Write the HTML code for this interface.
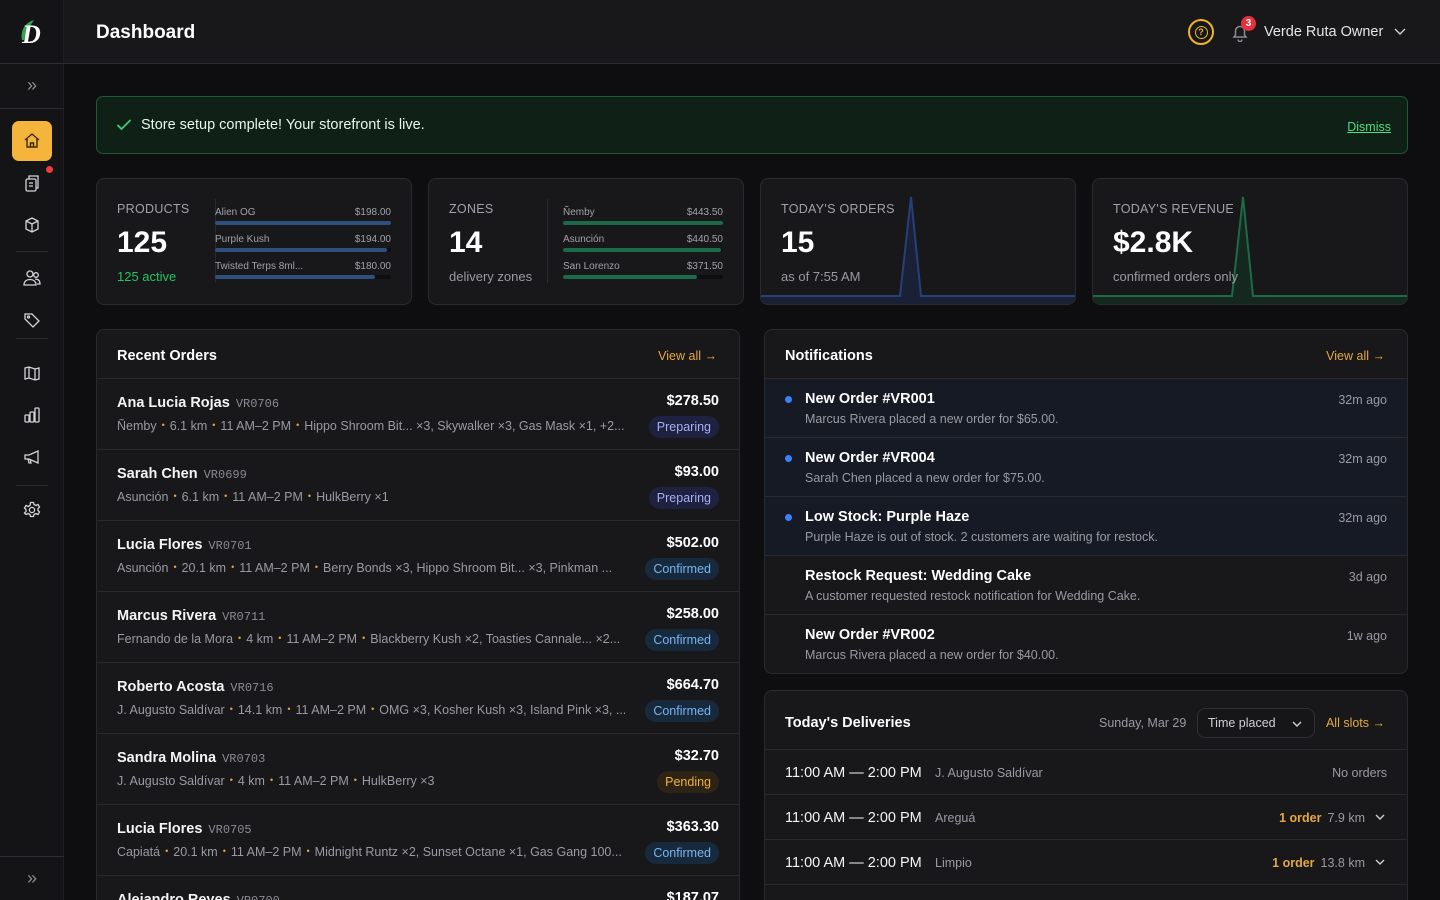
<!DOCTYPE html>
<html style="width:1440px;height:900px;overflow:hidden"><head><meta charset="utf-8"><style>
*{box-sizing:border-box;margin:0;padding:0}
body{width:1440px;height:900px;overflow:hidden;background:#0e0e10;font-family:"Liberation Sans",sans-serif;color:#e5e5e5;position:relative}
.side{position:absolute;left:0;top:0;width:64px;height:900px;background:#141416;border-right:1px solid #1f1f23}
.hdr{position:absolute;left:64px;top:0;right:0;height:64px;background:#18181b;border-bottom:1px solid #2a2d33}
.ico{position:absolute;left:22px;width:20px;height:20px}
svg{display:block}
.card{position:absolute;top:178px;width:316px;height:127px;background:#18181b;border:1px solid #2a2a2e;border-radius:8px;overflow:hidden}
.lbl{position:absolute;left:20px;top:23px;font-size:12.5px;color:#a1a1aa;letter-spacing:.3px}
.big{position:absolute;left:20px;top:47px;font-size:30px;font-weight:bold;color:#fff}
.sub{position:absolute;left:20px;top:90px;font-size:13px;color:#9a9aa2}
.bars{position:absolute;left:118px;top:20px;width:176px;border-left:1px solid #2a2a2e;padding-left:0}
.br{position:absolute;left:0;width:176px;font-size:10px;color:#a1a1aa}
.br span{position:absolute;right:0}
.br i{position:absolute;left:0;top:14px;height:4px;width:176px;background:#0e0e10;border-radius:2px}
.br b{position:absolute;left:0;top:14px;height:4px;border-radius:2px}
.panel{position:absolute;background:#18181b;border:1px solid #2a2a2e;border-radius:8px;overflow:hidden}
.ph{height:49px;border-bottom:1px solid #2a2a2e;position:relative}
.ph h3{position:absolute;left:20px;top:18px;font-size:14.5px;color:#fff}
.va{position:absolute;right:22px;top:19px;font-size:12.5px;color:#e5a83b}
.row{position:relative;height:71px;border-bottom:1px solid #2a2a2e}
.row .n{position:absolute;left:20px;top:16px;font-size:14.5px;font-weight:bold;color:#f4f4f5}
.row .n em{font-style:normal;font-weight:normal;font-family:"Liberation Mono",monospace;font-size:12px;color:#8a8a92;margin-left:6px}
.row .d{position:absolute;left:20px;top:40px;font-size:12.5px;color:#9a9aa2;white-space:nowrap;width:510px;overflow:hidden}
.dot{color:#e5a83b;margin:0 5px;font-size:9px;position:relative;top:-2px}
.row .p{position:absolute;right:20px;top:14px;font-size:14.5px;font-weight:bold;color:#fff}
.st{position:absolute;right:20px;top:37px;height:22px;line-height:22px;padding:0 8px;border-radius:11px;font-size:12.5px}
.prep{background:#1e2140;color:#a5b0f5}
.conf{background:#172a3d;color:#79b4ef}
.pend{background:#2e2416;color:#f0b23d}
.nr{position:relative;height:59px;border-bottom:1px solid #2a2a2e}
.nr.u{background:#161a24}
.nr .t{position:absolute;left:40px;top:12px;font-size:14.5px;font-weight:bold;color:#fff}
.nr .m{position:absolute;left:40px;top:33px;font-size:12.5px;color:#9a9aa2}
.nr .a{position:absolute;right:20px;top:14px;font-size:12.5px;color:#9a9aa2}
.nr .bd{position:absolute;left:20px;top:17px;width:7px;height:7px;border-radius:50%;background:#3b82f6}
.dr{position:relative;height:45px;border-bottom:1px solid #2a2a2e}
.dr .tm{position:absolute;left:20px;top:15px;font-size:14.5px;color:#f4f4f5}
.dr .lc{position:absolute;left:170px;top:16px;font-size:12.5px;color:#9a9aa2}
.dr .r{position:absolute;right:42px;top:16px;font-size:12.5px;color:#9a9aa2}
.dr .r b{color:#e5a83b;margin-right:6px}
.dr svg{position:absolute;right:22px;top:19px}
</style></head><body>
<div class="side">
 <div style="position:absolute;left:0;top:0;width:64px;height:64px;border-bottom:1px solid #2a2d33">
  <svg width="64" height="64" viewBox="0 0 64 64"><path d="M22 40 C20 30 26 22 34 20 C30 26 26 32 24 40Z" fill="#2fa84f"/><text x="22" y="43" font-family="Liberation Serif" font-style="italic" font-weight="bold" font-size="26" fill="#fff">D</text></svg>
 </div>
 <div style="position:absolute;left:0;top:64px;width:64px;height:45px;border-bottom:1px solid #2a2d33;color:#8a8a92;font-size:18px;text-align:center;line-height:42px">»</div>
 <div style="position:absolute;left:12px;top:121px;width:40px;height:40px;background:#f5b53d;border-radius:7px"></div>
 <svg class="ico" style="top:131px" viewBox="0 0 20 20" fill="none" stroke="#3a2a08" stroke-width="1.4"><path d="M3 9 L10 3 L17 9 M5 8 V16 H15 V8 M8.5 16 V12 H11.5 V16"/></svg>
 <div style="position:absolute;left:46px;top:166px;width:7px;height:7px;border-radius:50%;background:#ef3b3b"></div>
 <svg class="ico" style="top:173px" viewBox="0 0 20 20" fill="none" stroke="#d4d4d8" stroke-width="1.3"><rect x="4" y="6" width="10" height="12" rx="1.5"/><path d="M7 6V3h9v12h-2M7 10h4M7 13h4"/></svg>
 <svg class="ico" style="top:215px" viewBox="0 0 20 20" fill="none" stroke="#d4d4d8" stroke-width="1.3"><path d="M10 3l6 3v8l-6 3-6-3V6z M4 6l6 3 6-3 M10 9v8"/></svg>
 <div style="position:absolute;left:16px;top:251px;width:32px;height:1px;background:#2a2a2e"></div>
 <svg class="ico" style="top:268px" viewBox="0 0 20 20" fill="none" stroke="#d4d4d8" stroke-width="1.3"><circle cx="8" cy="6" r="3"/><circle cx="14" cy="7" r="2.3"/><path d="M2 17c0-4 3-5.5 6-5.5s6 1.5 6 5.5z M13 11c3 0 5 1.5 5 5h-3"/></svg>
 <svg class="ico" style="top:310px" viewBox="0 0 20 20" fill="none" stroke="#d4d4d8" stroke-width="1.3"><path d="M3 4h7l7 7-6 6-8-8z"/><circle cx="6.5" cy="7" r="1"/></svg>
 <div style="position:absolute;left:16px;top:338px;width:32px;height:1px;background:#2a2a2e"></div>
 <svg class="ico" style="top:363px" viewBox="0 0 20 20" fill="none" stroke="#d4d4d8" stroke-width="1.3"><path d="M3 5l4-1 6 2 4-1v11l-4 1-6-2-4 1z M7 4v11 M13 6v11"/></svg>
 <svg class="ico" style="top:405px" viewBox="0 0 20 20" fill="none" stroke="#d4d4d8" stroke-width="1.3"><rect x="3" y="10" width="4" height="7" rx="1"/><rect x="8" y="7" width="4" height="10" rx="1"/><rect x="13" y="3" width="4" height="14" rx="1"/></svg>
 <svg class="ico" style="top:447px" viewBox="0 0 20 20" fill="none" stroke="#d4d4d8" stroke-width="1.3"><path d="M3 8h4l9-4v12l-9-4H3z M6 12l1 4h2l-1-4"/></svg>
 <div style="position:absolute;left:16px;top:485px;width:32px;height:1px;background:#2a2a2e"></div>
 <svg class="ico" style="top:500px" viewBox="0 0 20 20" fill="none" stroke="#d4d4d8" stroke-width="1.3"><circle cx="10" cy="10" r="2.6"/><path d="M8.5 2.5h3l.5 2 2 1 2-1 1.5 2.5-1.5 1.5v2l1.5 1.5-1.5 2.5-2-1-2 1-.5 2h-3l-.5-2-2-1-2 1L2.5 13 4 11.5v-2L2.5 8 4 5.5l2 1 2-1z"/></svg>
 <div style="position:absolute;left:0;top:856px;width:64px;height:44px;border-top:1px solid #2a2d33;color:#8a8a92;font-size:18px;text-align:center;line-height:42px">»</div>
</div>
<div class="hdr">
 <div style="position:absolute;left:32px;top:22px;font-size:19px;font-weight:bold;color:#fff">Dashboard</div>
 <div style="position:absolute;left:1124px;top:19px;width:26px;height:26px;border:2px solid #f0b323;border-radius:50%;color:#f0b323;font-size:12px;text-align:center;line-height:22px"><span style="display:inline-block;width:13px;height:13px;border:1.5px solid #f0b323;border-radius:50%;line-height:10px;font-size:9px;font-weight:bold;vertical-align:middle">?</span></div>
 <svg style="position:absolute;left:1166px;top:22px" width="20" height="20" viewBox="0 0 20 20" fill="none" stroke="#8a8a92" stroke-width="1.5"><path d="M4 15h12l-1.5-2V9a4.5 4.5 0 0 0-9 0v4z M8 17.5a2 2 0 0 0 4 0"/></svg>
 <div style="position:absolute;left:1177px;top:16px;width:15px;height:15px;border-radius:50%;background:#e5313b;color:#fff;font-size:10px;font-weight:bold;text-align:center;line-height:15px">3</div>
 <div style="position:absolute;left:1200px;top:24px;font-size:14.5px;color:#e5e5e5">Verde Ruta Owner</div>
 <svg style="position:absolute;left:1330px;top:27px" width="12" height="10" viewBox="0 0 12 10" fill="none" stroke="#cfcfd4" stroke-width="1.4"><path d="M1 2l5 5 5-5"/></svg>
</div>

<div style="position:absolute;left:96px;top:96px;width:1312px;height:58px;background:#0f2117;border:1px solid #1f5a33;border-radius:7px">
 <svg style="position:absolute;left:19px;top:21px" width="16" height="14" viewBox="0 0 16 14" fill="none" stroke="#3fcf6f" stroke-width="1.8"><path d="M1.5 7l4 4 9-9"/></svg>
 <div style="position:absolute;left:44px;top:20px;font-size:14.5px;color:#e8f5ec">Store setup complete! Your storefront is live.</div>
 <div style="position:absolute;right:16px;top:23px;font-size:12.5px;color:#4ade80;text-decoration:underline">Dismiss</div>
</div>

<div class="card" style="left:96px"><div class="lbl">PRODUCTS</div><div class="big">125</div><div class="sub" style="color:#22c55e">125 active</div>
 <div class="bars" style="height:84px;top:20px"></div>
 <div style="position:absolute;left:118px;top:28px">
  <div class="br" style="top:0">Alien OG<span>$198.00</span><i></i><b style="width:176px;background:#2f4f7d"></b></div>
  <div class="br" style="top:27px">Purple Kush<span>$194.00</span><i></i><b style="width:172px;background:#2f4f7d"></b></div>
  <div class="br" style="top:54px">Twisted Terps 8ml...<span>$180.00</span><i></i><b style="width:160px;background:#2f4f7d"></b></div>
 </div></div>
<div class="card" style="left:428px"><div class="lbl">ZONES</div><div class="big">14</div><div class="sub">delivery zones</div>
 <div class="bars" style="height:84px;top:20px"></div>
 <div style="position:absolute;left:134px;top:28px">
  <div class="br" style="top:0;width:160px">Ñemby<span>$443.50</span><i style="width:160px"></i><b style="width:160px;background:#1b6a4a"></b></div>
  <div class="br" style="top:27px;width:160px">Asunción<span>$440.50</span><i style="width:160px"></i><b style="width:158px;background:#1b6a4a"></b></div>
  <div class="br" style="top:54px;width:160px">San Lorenzo<span>$371.50</span><i style="width:160px"></i><b style="width:134px;background:#1b6a4a"></b></div>
 </div></div>
<div class="card" style="left:760px"><svg style="position:absolute;left:0;top:0" width="316" height="127"><path d="M0 117 L139 117 L150 18 L160 117 L316 117 L316 127 L0 127Z" fill="#1a2035"/><path d="M0 117 L139 117 L150 18 L160 117 L316 117" fill="none" stroke="#26407a" stroke-width="2"/></svg><div class="lbl">TODAY'S ORDERS</div><div class="big">15</div><div class="sub">as of 7:55 AM</div></div>
<div class="card" style="left:1092px"><svg style="position:absolute;left:0;top:0" width="316" height="127"><path d="M0 117 L139 117 L150 18 L160 117 L316 117 L316 127 L0 127Z" fill="#142820"/><path d="M0 117 L139 117 L150 18 L160 117 L316 117" fill="none" stroke="#1d6a48" stroke-width="2"/></svg><div class="lbl">TODAY'S REVENUE</div><div class="big">$2.8K</div><div class="sub">confirmed orders only</div></div>

<div class="panel" style="left:96px;top:329px;width:644px;height:571px;border-bottom:0;border-radius:8px 8px 0 0">
 <div class="ph"><h3>Recent Orders</h3><div class="va">View all →</div></div>
 <div class="row"><div class="n">Ana Lucia Rojas<em>VR0706</em></div><div class="d">Ñemby<span class="dot">•</span>6.1 km<span class="dot">•</span>11 AM–2 PM<span class="dot">•</span>Hippo Shroom Bit... ×3, Skywalker ×3, Gas Mask ×1, +2...</div><div class="p">$278.50</div><div class="st prep">Preparing</div></div>
 <div class="row"><div class="n">Sarah Chen<em>VR0699</em></div><div class="d">Asunción<span class="dot">•</span>6.1 km<span class="dot">•</span>11 AM–2 PM<span class="dot">•</span>HulkBerry ×1</div><div class="p">$93.00</div><div class="st prep">Preparing</div></div>
 <div class="row"><div class="n">Lucia Flores<em>VR0701</em></div><div class="d">Asunción<span class="dot">•</span>20.1 km<span class="dot">•</span>11 AM–2 PM<span class="dot">•</span>Berry Bonds ×3, Hippo Shroom Bit... ×3, Pinkman ...</div><div class="p">$502.00</div><div class="st conf">Confirmed</div></div>
 <div class="row"><div class="n">Marcus Rivera<em>VR0711</em></div><div class="d">Fernando de la Mora<span class="dot">•</span>4 km<span class="dot">•</span>11 AM–2 PM<span class="dot">•</span>Blackberry Kush ×2, Toasties Cannale... ×2...</div><div class="p">$258.00</div><div class="st conf">Confirmed</div></div>
 <div class="row"><div class="n">Roberto Acosta<em>VR0716</em></div><div class="d">J. Augusto Saldívar<span class="dot">•</span>14.1 km<span class="dot">•</span>11 AM–2 PM<span class="dot">•</span>OMG ×3, Kosher Kush ×3, Island Pink ×3, ...</div><div class="p">$664.70</div><div class="st conf">Confirmed</div></div>
 <div class="row"><div class="n">Sandra Molina<em>VR0703</em></div><div class="d">J. Augusto Saldívar<span class="dot">•</span>4 km<span class="dot">•</span>11 AM–2 PM<span class="dot">•</span>HulkBerry ×3</div><div class="p">$32.70</div><div class="st pend">Pending</div></div>
 <div class="row"><div class="n">Lucia Flores<em>VR0705</em></div><div class="d">Capiatá<span class="dot">•</span>20.1 km<span class="dot">•</span>11 AM–2 PM<span class="dot">•</span>Midnight Runtz ×2, Sunset Octane ×1, Gas Gang 100...</div><div class="p">$363.30</div><div class="st conf">Confirmed</div></div>
 <div class="row" style="border:0;height:24px"><div class="n">Alejandro Reyes<em>VR0700</em></div><div class="p">$187.07</div></div>
</div>

<div class="panel" style="left:764px;top:329px;width:644px;height:345px">
 <div class="ph"><h3>Notifications</h3><div class="va">View all →</div></div>
 <div class="nr u"><div class="bd"></div><div class="t">New Order #VR001</div><div class="m">Marcus Rivera placed a new order for $65.00.</div><div class="a">32m ago</div></div>
 <div class="nr u"><div class="bd"></div><div class="t">New Order #VR004</div><div class="m">Sarah Chen placed a new order for $75.00.</div><div class="a">32m ago</div></div>
 <div class="nr u"><div class="bd"></div><div class="t">Low Stock: Purple Haze</div><div class="m">Purple Haze is out of stock. 2 customers are waiting for restock.</div><div class="a">32m ago</div></div>
 <div class="nr"><div class="t">Restock Request: Wedding Cake</div><div class="m">A customer requested restock notification for Wedding Cake.</div><div class="a">3d ago</div></div>
 <div class="nr" style="border:0"><div class="t">New Order #VR002</div><div class="m">Marcus Rivera placed a new order for $40.00.</div><div class="a">1w ago</div></div>
</div>

<div class="panel" style="left:764px;top:690px;width:644px;height:210px;border-bottom:0;border-radius:8px 8px 0 0">
 <div class="ph" style="height:59px"><h3 style="top:24px">Today's Deliveries</h3>
  <div style="position:absolute;left:334px;top:25px;font-size:12.5px;color:#9a9aa2">Sunday, Mar 29</div>
  <div style="position:absolute;left:432px;top:17px;width:118px;height:30px;border:1px solid #2f2f34;border-radius:8px;background:#161618;font-size:12.5px;color:#cfcfd4;padding:7px 0 0 10px">Time placed<svg style="position:absolute;right:12px;top:12px" width="10" height="7" viewBox="0 0 10 7" fill="none" stroke="#cfcfd4" stroke-width="1.4"><path d="M1 1l4 4 4-4"/></svg></div>
  <div style="position:absolute;right:22px;top:25px;font-size:12.5px;color:#e5a83b">All slots →</div>
 </div>
 <div class="dr"><div class="tm">11:00 AM — 2:00 PM</div><div class="lc">J. Augusto Saldívar</div><div class="r" style="right:20px">No orders</div></div>
 <div class="dr"><div class="tm">11:00 AM — 2:00 PM</div><div class="lc">Areguá</div><div class="r"><b>1 order</b>7.9 km</div><svg width="10" height="7" viewBox="0 0 10 7" fill="none" stroke="#cfcfd4" stroke-width="1.4"><path d="M1 1l4 4 4-4"/></svg></div>
 <div class="dr"><div class="tm">11:00 AM — 2:00 PM</div><div class="lc">Limpio</div><div class="r"><b>1 order</b>13.8 km</div><svg width="10" height="7" viewBox="0 0 10 7" fill="none" stroke="#cfcfd4" stroke-width="1.4"><path d="M1 1l4 4 4-4"/></svg></div>
</div>
</body></html>
